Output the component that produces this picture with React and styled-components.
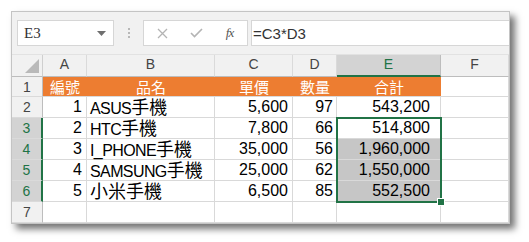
import styled, { createGlobalStyle } from "styled-components";

const GlobalStyle = createGlobalStyle`
  html, body {
    margin: 0;
    padding: 0;
    background: #ffffff;
  }
  body {
    font-family: "Liberation Sans", "Noto Sans CJK TC", sans-serif;
  }
`;

const Page = styled.div`
  padding: 11px 0 0 11px;
  width: 529px;
  height: 242px;
  box-sizing: border-box;
`;

const Sheet = styled.div`
  width: 499px;
  border: 1px solid #c4c4c4;
  background: #fff;
  box-sizing: border-box;
  box-shadow: 5px 5px 7px rgba(0, 0, 0, 0.55);
`;

const Toolbar = styled.div`
  height: 43px;
  background: #f1f1f1;
  display: flex;
  align-items: flex-start;
  padding: 8px 0 0 5px;
  box-sizing: border-box;
  border-bottom: 1px solid #e2e2e2;
`;

const Box = styled.div`
  height: 26px;
  width: ${(p) => p.w};
  background: #fff;
  border: 1px solid #d6d6d6;
  box-sizing: border-box;
  display: flex;
  align-items: center;
  flex: ${(p) => (p.grow ? 1 : "none")};
  margin-left: ${(p) => p.ml || "0"};
  border-right: ${(p) => (p.grow ? "none" : "1px solid #d6d6d6")};
`;

const NameText = styled.span`
  font-family: "Liberation Serif", serif;
  font-size: 15px;
  color: #333;
  padding-left: 6px;
  flex: 1;
`;

const FormulaText = styled.span`
  font-family: "Liberation Sans", sans-serif;
  font-size: 15px;
  color: #333;
  padding-left: 1px;
`;

const Dots = styled.div`
  width: 29px;
  height: 26px;
  display: flex;
  flex-direction: column;
  align-items: center;
  justify-content: center;
  gap: 2px;
  span {
    width: 2px;
    height: 2px;
    background: #b8b8b8;
  }
`;

const IconSlot = styled.div`
  width: ${(p) => p.w || "33px"};
  height: 24px;
  display: flex;
  align-items: center;
  justify-content: center;
`;

const Fx = styled.span`
  font-family: "Liberation Serif", serif;
  font-style: italic;
  font-size: 13px;
  color: #555;
  letter-spacing: -1px;
`;

const Grid = styled.div`
  position: relative;
  display: grid;
  grid-template-columns: 31px 44px 128px 78px 44px 104px 68px;
  grid-template-rows: 22px 20px repeat(6, 21px);
`;

const Corner = styled.div`
  background: #f1f1f1;
  border-right: 1px solid #cfcfcf;
  border-bottom: 1px solid #bdbdbd;
  position: relative;
  svg {
    position: absolute;
    right: 3px;
    bottom: 3px;
  }
`;

const ColHead = styled.div`
  background: ${(p) => (p.active ? "#d3d3d3" : "#f1f1f1")};
  color: ${(p) => (p.active ? "#217346" : "#444")};
  font-size: 14px;
  display: flex;
  align-items: center;
  justify-content: center;
  padding-bottom: 3px;
  box-sizing: border-box;
  border-right: 1px solid ${(p) => (p.active ? "#bdbdbd" : "#dadada")};
  border-bottom: ${(p) => (p.active ? "2px solid #217346" : "1px solid #bdbdbd")};
`;

const RowHead = styled.div`
  background: ${(p) => (p.active ? "#d3d3d3" : "#f1f1f1")};
  color: ${(p) => (p.active ? "#217346" : "#444")};
  font-size: 14px;
  display: flex;
  align-items: center;
  justify-content: center;
  box-sizing: border-box;
  border-bottom: 1px solid #dadada;
  border-right: ${(p) => (p.active ? "2px solid #217346" : "1px solid #bdbdbd")};
`;

const Cell = styled.div`
  font-size: 16px;
  line-height: 20px;
  color: #000;
  background: ${(p) => (p.shade ? "#c6c6c6" : "#fff")};
  display: flex;
  align-items: center;
  justify-content: ${(p) => (p.left ? "flex-start" : "flex-end")};
  padding: 0 ${(p) => p.pr || "4px"} 0 3px;
  box-sizing: border-box;
  border-right: 1px solid #d9d9d9;
  border-bottom: 1px solid #d9d9d9;
  white-space: nowrap;
`;

const Label = styled.span`
  font-size: 16px;
  letter-spacing: -0.6px;
  line-height: 20px;
`;

const Cjk = styled.span`
  font-family: "Noto Sans CJK TC", sans-serif;
  font-size: 18px;
  letter-spacing: 0;
`;

const HeadCell = styled.div`
  background: ${(p) => (p.blank ? "#fff" : "#ed7d31")};
  color: #fff;
  font-family: "Noto Sans CJK TC", sans-serif;
  font-size: 15px;
  display: flex;
  align-items: center;
  justify-content: center;
  box-sizing: border-box;
  border-bottom: 1px solid #d9d9d9;
  border-right: ${(p) => (p.blank ? "1px solid #d9d9d9" : "none")};
  line-height: 1;
`;

const Selection = styled.div`
  position: absolute;
  left: 324px;
  top: 62px;
  width: 106px;
  height: 86px;
  border: 2px solid #217346;
  box-sizing: border-box;
  pointer-events: none;
`;

const Handle = styled.div`
  position: absolute;
  right: -5px;
  bottom: -5px;
  width: 6px;
  height: 6px;
  background: #217346;
  border: 1px solid #fff;
`;

const cols = ["A", "B", "C", "D", "E", "F"];

const rows = [
  { id: 1, name: "ASUS", price: "5,600", qty: "97", total: "543,200" },
  { id: 2, name: "HTC", price: "7,800", qty: "66", total: "514,800" },
  { id: 3, name: "I_PHONE", price: "35,000", qty: "56", total: "1,960,000" },
  { id: 4, name: "SAMSUNG", price: "25,000", qty: "62", total: "1,550,000" },
  { id: 5, name: "", cjkName: "小米", price: "6,500", qty: "85", total: "552,500" },
];

export default function App() {
  return (
    <>
      <GlobalStyle />
      <Page>
        <Sheet>
          <Toolbar>
            <Box w="97px">
              <NameText>E3</NameText>
              <svg width="9" height="5" viewBox="0 0 9 5" style={{ marginRight: 7 }}>
                <path d="M0 0 H9 L4.5 5 Z" fill="#6f6f6f" />
              </svg>
            </Box>
            <Dots>
              <span />
              <span />
              <span />
            </Dots>
            <Box w="105px">
              <IconSlot w="36px">
                <svg width="11" height="11" viewBox="0 0 11 11">
                  <path d="M1 1 L10 10 M10 1 L1 10" stroke="#b4b4b4" strokeWidth="1.3" fill="none" />
                </svg>
              </IconSlot>
              <IconSlot w="32px">
                <svg width="13" height="10" viewBox="0 0 13 10">
                  <path d="M1 5 L4.5 8.5 L12 1" stroke="#b4b4b4" strokeWidth="1.6" fill="none" />
                </svg>
              </IconSlot>
              <IconSlot w="35px">
                <Fx>fx</Fx>
              </IconSlot>
            </Box>
            <Box grow ml="3px">
              <FormulaText>=C3*D3</FormulaText>
            </Box>
          </Toolbar>

          <Grid>
            <Corner>
              <svg width="14" height="14" viewBox="0 0 14 14">
                <path d="M14 0 V14 H0 Z" fill="#b9b9b9" />
              </svg>
            </Corner>
            {cols.map((c) => (
              <ColHead key={c} active={c === "E"}>
                {c}
              </ColHead>
            ))}

            <RowHead>1</RowHead>
            <HeadCell>編號</HeadCell>
            <HeadCell>品名</HeadCell>
            <HeadCell>單價</HeadCell>
            <HeadCell>數量</HeadCell>
            <HeadCell>合計</HeadCell>
            <HeadCell blank />

            {rows.map((r, i) => {
              const rowNo = i + 2;
              const active = rowNo >= 3;
              return [
                <RowHead key={`h${rowNo}`} active={active}>
                  {rowNo}
                </RowHead>,
                <Cell key={`a${rowNo}`}>{r.id}</Cell>,
                <Cell key={`b${rowNo}`} left>
                  <Label>
                    {r.name}
                    <Cjk>{r.cjkName || ""}手機</Cjk>
                  </Label>
                </Cell>,
                <Cell key={`c${rowNo}`}>{r.price}</Cell>,
                <Cell key={`d${rowNo}`} pr="3px">{r.qty}</Cell>,
                <Cell key={`e${rowNo}`} shade={rowNo >= 4} pr="10px">
                  {r.total}
                </Cell>,
                <Cell key={`f${rowNo}`} />,
              ];
            })}

            <RowHead>7</RowHead>
            {cols.map((c) => (
              <Cell key={`r7${c}`} />
            ))}

            <Selection>
              <Handle />
            </Selection>
          </Grid>
        </Sheet>
      </Page>
    </>
  );
}
